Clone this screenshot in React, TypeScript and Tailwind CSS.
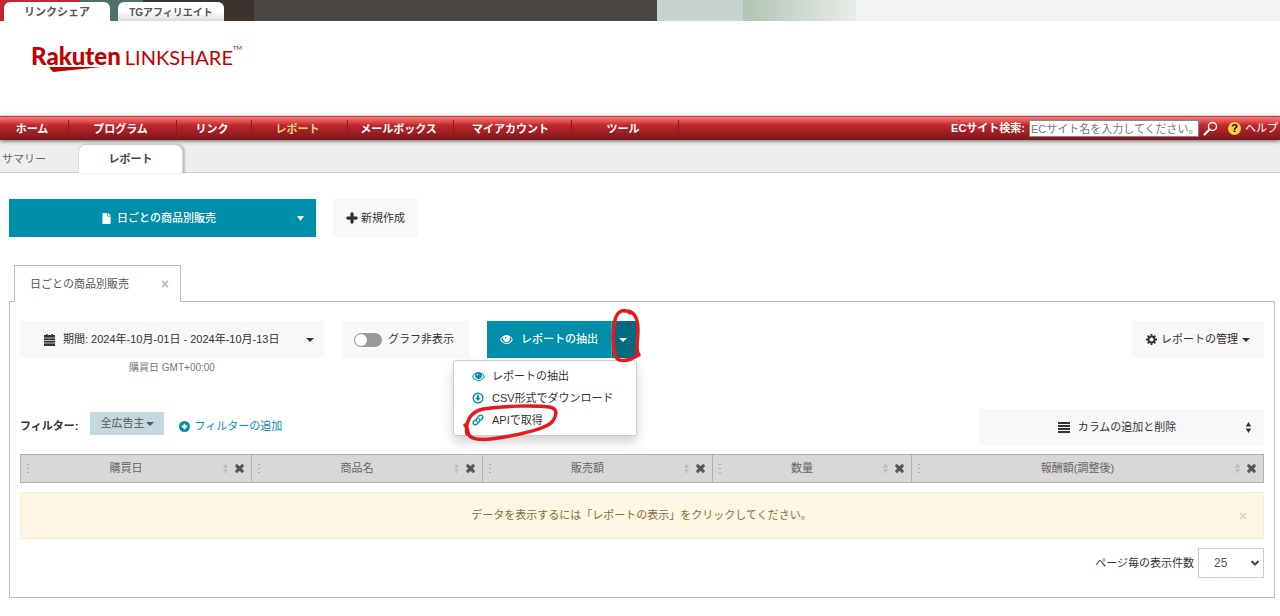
import type { ReactNode } from 'react'
import { FaFile, FaPlus, FaTimes } from 'react-icons/fa'

const siteTabs = [
  { label: 'リンクシェア', className: 'bg-white text-[11px]' },
  { label: 'TGアフィリエイト', className: 'bg-linear-to-b from-white from-50% to-[#dcdcdc] text-[10px]' },
]

const navItems = [
  { label: 'ホーム', width: 'w-[69px]' },
  { label: 'プログラム', width: 'w-[108px]' },
  { label: 'リンク', width: 'w-[75px]' },
  { label: 'レポート', width: 'w-[96px]', active: true },
  { label: 'メールボックス', width: 'w-[106px]' },
  { label: 'マイアカウント', width: 'w-[118px]' },
  { label: 'ツール', width: 'w-[107px]' },
]

const columns = [
  { label: '購買日', width: 'w-[231px]' },
  { label: '商品名', width: 'w-[231px]' },
  { label: '販売額', width: 'w-[230px]' },
  { label: '数量', width: 'w-[199px]' },
  { label: '報酬額(調整後)', width: '' },
]

function Caret({ className = 'h-1 w-2' }: { className?: string }) {
  return (
    <svg viewBox="0 0 8 4" preserveAspectRatio="none" className={`shrink-0 ${className}`} fill="currentColor">
      <path d="M0 0h8L4 4z" />
    </svg>
  )
}

function SortIcon({ className }: { className: string }) {
  return (
    <svg viewBox="0 0 6 12" className={`shrink-0 ${className}`} fill="currentColor">
      <path d="M3 0l3 5H0zM3 12l3-5H0z" />
    </svg>
  )
}

function EyeIcon() {
  return (
    <svg viewBox="0 0 14 10" className="h-[9px] w-[13px] shrink-0" fill="currentColor">
      <path
        fillRule="evenodd"
        d="M7 0C3.600 0 1 2.500 0 5c1 2.500 3.600 5 7 5s6-2.500 7-5C13 2.500 10.400 0 7 0zM3.500 2.300C3 4 3.100 5.400 4 6.500c1.500 1.800 4.500 1.800 6 0 .9-1.100 1-2.500.5-4.200C11.600 3 12.400 4 12.800 5 11.800 7.200 9.700 8.900 7 8.900S2.200 7.200 1.200 5c.4-1 1.200-2 2.300-2.700zM5 3.800C5.200 2.600 6 1.900 7 1.900v1C6.300 2.900 5.900 3.300 5.800 4z"
      />
    </svg>
  )
}

function DownloadIcon() {
  return (
    <svg viewBox="0 0 12 12" className="h-3 w-3 shrink-0">
      <circle cx="6" cy="6" r="4.800" fill="none" stroke="currentColor" strokeWidth="1.400" />
      <path d="M5 2.800h2v3h1.800L6 9 3.200 5.800H5z" fill="currentColor" />
    </svg>
  )
}

function LinkIcon() {
  return (
    <svg viewBox="0 0 12 12" className="h-3 w-3 shrink-0" fill="none" stroke="currentColor" strokeWidth="1.400" strokeLinecap="round">
      <path d="M5 7.200C4 6.300 4.100 5.100 4.900 4.200L7.200 1.800c.9-.9 2.200-.9 3 0 .8.8.8 2 0 2.900L8.900 6" />
      <path d="M7 4.800c1 .9.900 2.100.1 3L4.800 10.200c-.9.9-2.200.9-3 0-.8-.8-.8-2 0-2.900L3.100 6" />
    </svg>
  )
}

function CalendarIcon() {
  return (
    <svg viewBox="0 0 11 12" className="h-3 w-[11px] shrink-0">
      <path d="M0 1h2V0h1.500v1h4V0H9v1h2v11H0z" fill="currentColor" />
      <path d="M0 4h11M0 6.500h11M0 9h11" stroke="#f8f8f8" strokeWidth=".7" />
    </svg>
  )
}

function GearIcon() {
  return (
    <svg viewBox="0 0 12 12" className="h-[11px] w-[11px] shrink-0" fill="none" stroke="currentColor">
      <circle cx="6" cy="6" r="3.300" strokeWidth="2.200" />
      <path d="M6 0v2M6 10v2M0 6h2M10 6h2M1.800 1.800l1.300 1.300M8.900 8.900l1.300 1.300M1.800 10.200l1.300-1.300M8.900 3.100l1.300-1.300" strokeWidth="2" />
    </svg>
  )
}

function CirclePlusIcon() {
  return (
    <svg viewBox="0 0 12 12" className="h-[11px] w-[11px] shrink-0">
      <circle cx="6" cy="6" r="6" fill="currentColor" />
      <path d="M6 3v6M3 6h6" stroke="white" strokeWidth="2" />
    </svg>
  )
}

function Logo() {
  return (
    <div className="flex items-baseline gap-1 text-[#bf0000]">
      <span className="relative font-['Lato'] text-2xl leading-7 font-black">
        Rakuten
        <svg viewBox="0 0 52 5" className="absolute top-[25px] left-[18px] h-[5px] w-[52px]" fill="currentColor">
          <path d="M0 0h52L4 5z" />
        </svg>
      </span>
      <span className="font-['Lato'] text-xl leading-7">LINKSHARE</span>
      <span className="-ml-1 self-start font-['Lato'] text-[6px] leading-3">TM</span>
    </div>
  )
}

function SiteHeader() {
  return (
    <header>
      <div className="flex h-[21px] items-end gap-2 bg-[linear-gradient(to_right,#c1272d_0_80px,#4e706c_80px_143px,#3b342e_143px_254px,#4b4843_254px_657px,#c5d2ce_657px_743px,#b2c4b5_743px,#e8ece8_856px,#f1f4f3_856px)] pl-1">
        {siteTabs.map((tab) => (
          <a
            key={tab.label}
            href="#"
            className={`flex h-[19px] w-[106px] items-center justify-center rounded-t-md pt-[2px] font-bold text-[#555] ${tab.className}`}
          >
            {tab.label}
          </a>
        ))}
      </div>
      <div className="h-[95px] pt-[21px] pl-[31px]">
        <Logo />
      </div>
    </header>
  )
}

function MainNav() {
  return (
    <nav className="relative z-10 flex h-6 items-center justify-between border-t border-[#b5443c] bg-linear-to-b from-[#fb7a7a] via-[#c1272d] via-35% to-[#7c161b] pr-[2px] text-white shadow-[0_1px_4px_rgba(0,0,0,0.6)]">
      <ul className="flex">
        {navItems.map((item) => (
          <li key={item.label} className={`border-r border-[#8b1a1e] ${item.width}`}>
            <a
              href="#"
              className={`block pr-1 text-center text-[11px] leading-[18px] font-bold ${item.active ? 'text-[#f3d078]' : ''}`}
            >
              {item.label}
            </a>
          </li>
        ))}
      </ul>
      <div className="flex items-center">
        <label htmlFor="site-search" className="mr-1 font-bold">
          ECサイト検索:
        </label>
        <input
          id="site-search"
          type="text"
          placeholder="ECサイト名を入力してください。"
          className="h-[17px] w-[170px] border border-[#888] bg-white px-px text-[11px] text-[#333] placeholder:text-[#777]"
        />
        <button type="button" aria-label="検索" className="ml-1">
          <svg viewBox="0 0 15 15" className="h-[15px] w-[15px]" fill="none" stroke="white">
            <circle cx="9.500" cy="5.500" r="4" strokeWidth="1.500" />
            <path d="M6.500 8.500L1.500 13.500" strokeWidth="2.200" strokeLinecap="round" />
          </svg>
        </button>
        <a href="#" className="ml-[10px] flex items-center gap-1">
          <span className="flex h-[13px] w-[13px] items-center justify-center rounded-full bg-[#f8cf45] font-bold text-black">?</span>
          ヘルプ
        </a>
      </div>
    </nav>
  )
}

function SubNav() {
  return (
    <div className="flex h-[33px] items-end border-b border-[#ccd0cb] bg-[#edefec]">
      <a href="#" className="w-[78px] pb-1 pl-[2px] leading-[18px] text-[#666]">
        サマリー
      </a>
      <a
        href="#"
        className="-mb-px flex h-[29px] w-[105px] items-center justify-center rounded-t-lg border border-b-0 border-[#d5d8d4] bg-white font-bold text-[#444] shadow-[2px_0_2px_rgba(0,0,0,0.2)]"
      >
        レポート
      </a>
    </div>
  )
}

function MenuItem({ icon, children }: { icon: ReactNode; children: ReactNode }) {
  return (
    <li>
      <a href="#" className="flex h-[22px] items-center pl-[18px]">
        <span className="flex w-5 text-[#008faa]">{icon}</span>
        {children}
      </a>
    </li>
  )
}

function ExtractButton() {
  return (
    <div className="relative ml-[18px] flex text-white">
      <button type="button" className="flex h-[37px] w-[124px] items-center justify-center gap-2 bg-[#008faa] font-medium">
        <EyeIcon />
        レポートの抽出
      </button>
      <button
        type="button"
        aria-label="メニューを開く"
        className="flex w-[26px] items-center justify-center border-l border-[#4aabc0] bg-[#006b80] pr-1"
      >
        <Caret />
      </button>
      <ul className="absolute top-[39px] right-0 z-20 w-[184px] rounded-[3px] border border-[#ccc] bg-white py-1 text-[#333] shadow-[0_6px_12px_rgba(0,0,0,0.18)]">
        <MenuItem icon={<EyeIcon />}>レポートの抽出</MenuItem>
        <MenuItem icon={<DownloadIcon />}>CSV形式でダウンロード</MenuItem>
        <MenuItem icon={<LinkIcon />}>APIで取得</MenuItem>
      </ul>
      {/* hand-drawn marks over the toggle and the API entry */}
      <svg
        viewBox="0 0 184 140"
        className="pointer-events-none absolute -top-4 -left-[27px] z-30 h-[140px] w-[184px]"
        fill="none"
        stroke="#e8191c"
        strokeWidth="3.500"
        strokeLinecap="round"
        strokeLinejoin="round"
      >
        <path d="M170 8C164 3 157 6 155 15C152 28 153 41 155 50C157 57 165 56 171 54L179 50C175 46 178 37 178 25C178 13 174 5 165 6" />
        <path d="M5 120C10 126 6 129 11 132C20 137 38 133 50 131C66 128 85 124 92 117C98 109 97 103 89 102C73 100 42 101 23 104C9 107 5 119 7 129" />
      </svg>
    </div>
  )
}

function Toolbar() {
  return (
    <div className="flex items-start">
      <div className="w-[304px]">
        <button type="button" className="flex h-[37px] w-full items-center bg-[#f8f8f8] pr-[10px] pl-6">
          <CalendarIcon />
          <span className="ml-2">期間: 2024年-10月-01日 - 2024年-10月-13日</span>
          <Caret className="ml-auto h-1 w-2" />
        </button>
        <p className="text-center text-[10px] leading-5 text-[#777]">購買日 GMT+00:00</p>
      </div>
      <label className="ml-[18px] flex h-[37px] w-[127px] items-center gap-[6px] bg-[#f8f8f8] pl-3">
        <input
          type="checkbox"
          className="flex h-[14px] w-7 appearance-none items-center rounded-full bg-[#999] p-px before:h-3 before:w-3 before:rounded-full before:bg-white"
        />
        グラフ非表示
      </label>
      <ExtractButton />
      <button type="button" className="ml-auto flex h-[37px] w-[132px] items-center justify-center gap-1 bg-[#f8f8f8]">
        <GearIcon />
        レポートの管理
        <Caret />
      </button>
    </div>
  )
}

function FilterRow() {
  return (
    <div className="mt-[31px] flex items-start">
      <span className="leading-[34px] font-bold">フィルター:</span>
      <button type="button" className="mt-[3px] ml-3 flex h-[23px] w-[74px] items-center justify-center gap-[2px] bg-[#c4d9df] text-[#555]">
        全広告主
        <Caret />
      </button>
      <a href="#" className="ml-[15px] flex items-center gap-1 leading-[34px] text-[#008faa]">
        <CirclePlusIcon />
        フィルターの追加
      </a>
      <button type="button" className="ml-auto flex h-9 w-[285px] items-center bg-[#f8f8f8] pr-3 pl-[10px]">
        <span className="flex flex-1 items-center justify-center gap-2">
          <svg viewBox="0 0 12 11" className="h-[11px] w-3" stroke="currentColor" strokeWidth="2">
            <path d="M0 1h12M0 4h12M0 7h12M0 10h12" />
          </svg>
          カラムの追加と削除
        </span>
        <SortIcon className="h-[11px] w-[7px]" />
      </button>
    </div>
  )
}

function ReportTable() {
  return (
    <table className="mt-[9px] w-full table-fixed border-collapse">
      <thead>
        <tr>
          {columns.map((column) => (
            <th key={column.label} className={`h-7 border border-[#b0b0b0] bg-[#d8d8d8] p-0 font-normal text-[#666] ${column.width}`}>
              <div className="flex items-center px-[6px]">
                <span className="flex flex-col gap-[3px]">
                  <i className="h-px w-[2px] bg-[#aaa]" />
                  <i className="h-px w-[2px] bg-[#aaa]" />
                  <i className="h-px w-[2px] bg-[#aaa]" />
                </span>
                <span className="flex-1">{column.label}</span>
                <SortIcon className="h-[11px] w-[5px] text-[#bbb]" />
                <button type="button" aria-label="列を削除" className="ml-[6px]">
                  <FaTimes className="h-[11px] w-[11px] stroke-[#555] text-[#555]" strokeWidth={50} />
                </button>
              </div>
            </th>
          ))}
        </tr>
      </thead>
    </table>
  )
}

export default function App() {
  return (
    <div className="bg-white font-['Liberation_Sans','Noto_Sans_CJK_JP',sans-serif] text-[11px] text-[#333]">
      <SiteHeader />
      <MainNav />
      <SubNav />
      <main className="pt-[26px] pr-[5px] pb-4 pl-[9px]">
        <div className="flex gap-[17px]">
          <button type="button" className="flex h-[38px] w-[307px] items-center bg-[#008faa] px-3 font-medium text-white">
            <span className="flex flex-1 items-center justify-center gap-[6px]">
              <FaFile className="h-[11px] w-[9px]" />
              日ごとの商品別販売
            </span>
            <Caret className="h-[5px] w-[7px]" />
          </button>
          <button type="button" className="flex h-[38px] w-[85px] items-center justify-center gap-[3px] bg-[#f8f8f8]">
            <FaPlus className="h-3 w-3 stroke-current" strokeWidth={40} />
            新規作成
          </button>
        </div>

        <div className="relative z-10 mt-7 -mb-px ml-[5px] flex h-[37px] w-[167px] items-center justify-between border border-b-0 border-[#bbb] bg-white pr-[10px] pl-[15px] text-[#555]">
          日ごとの商品別販売
          <button type="button" aria-label="タブを閉じる" className="text-[#bbb]">
            <FaTimes className="h-[10px] w-[10px]" />
          </button>
        </div>
        <section className="border border-[#bbb] px-[10px] py-[19px]">
          <Toolbar />
          <FilterRow />
          <ReportTable />
          <div className="mt-[9px] flex h-[47px] items-center border border-[#faebcc] bg-[#fdf6e2] pr-[15px] pl-6 text-[#8a6d3b]">
            <p className="flex-1 text-center">データを表示するには「レポートの表示」をクリックしてください。</p>
            <button type="button" aria-label="閉じる" className="text-[#e0d8c0]">
              <FaTimes className="h-[10px] w-[10px]" />
            </button>
          </div>
          <div className="mt-[9px] flex items-center justify-end gap-1">
            <label htmlFor="page-size">ページ毎の表示件数</label>
            <div className="relative">
              <select id="page-size" defaultValue="25" className="block h-[30px] w-[66px] appearance-none border border-[#ccc] bg-white pl-[15px] text-xs text-[#555]">
                <option>10</option>
                <option>25</option>
                <option>50</option>
              </select>
              <svg viewBox="0 0 8 6" className="pointer-events-none absolute top-3 right-[5px] h-[6px] w-2" fill="none" stroke="#444" strokeWidth="2">
                <path d="M.5 1L4 4.500 7.500 1" />
              </svg>
            </div>
          </div>
        </section>
      </main>
    </div>
  )
}
